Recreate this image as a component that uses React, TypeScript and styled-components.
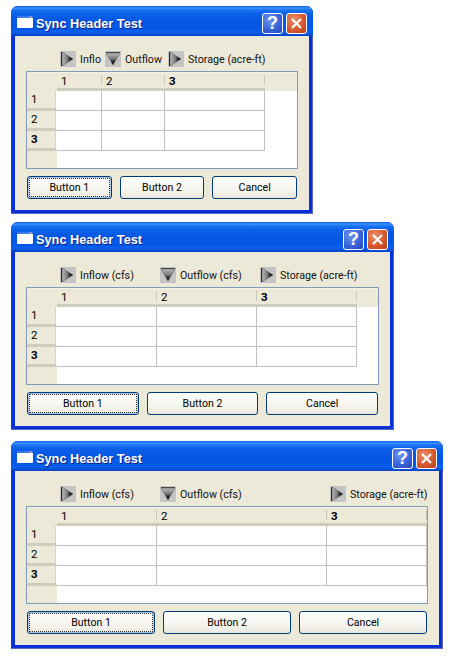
import React from "react";
import styled, { createGlobalStyle } from "styled-components";

const Global = createGlobalStyle`
  html, body { margin: 0; padding: 0; background: #fff; }
  body { font-family: Roboto, "Liberation Sans", Arial, sans-serif; font-size: 11px; color: #000; }
  #root { padding: 6px 0 0 11px; }
`;

const Window = styled.div<{ $w: number; $after: number }>`
  box-sizing: border-box;
  width: ${(p) => p.$w}px;
  height: 208px;
  margin-bottom: ${(p) => p.$after}px;
  display: flex;
  flex-direction: column;
  border-radius: 7px 7px 0 0;
  overflow: hidden;
  background: #0831d9;
  box-shadow: inset -1px -1px 0 #5b68b8, inset 1px 0 0 #0a45d8;
`;

const TitleBar = styled.div`
  flex: 0 0 30px;
  box-sizing: border-box;
  display: flex;
  align-items: flex-start;
  padding: 7px 6px 0 6px;
  background: linear-gradient(
    to bottom,
    #0a5be8 0,
    #3c93fb 2px,
    #1b72f0 4px,
    #0a5ee8 8px,
    #0557e2 16px,
    #0558e6 23px,
    #0a62ee 26px,
    #0a4fd8 28px,
    #0841c8 30px
  );
`;

const TitleGlyph = styled.svg`
  flex: none;
  margin: 3px 4px 0 0;
`;

const Title = styled.span`
  flex: 1;
  font: bold 12.75px/21px "Liberation Sans", Arial, sans-serif;
  color: #fff;
  text-shadow: 1px 1px 0 #0f1f8c;
  white-space: nowrap;
  margin-left: -1px;
`;

const CaptionGroup = styled.div`
  display: flex;
  gap: 3px;
`;

const CaptionButton = styled.div<{ $close?: boolean }>`
  box-sizing: border-box;
  width: 21px;
  height: 21px;
  border: 1px solid #fff;
  border-radius: 3px;
  display: flex;
  align-items: center;
  justify-content: center;
  color: #fff;
  background: ${(p) =>
    p.$close
      ? "radial-gradient(circle at 35% 30%, #e8906c 0, #d9592f 55%, #b93a14 100%)"
      : "radial-gradient(circle at 35% 30%, #6f95ef 0, #3b63d8 55%, #2247bd 100%)"};
`;

const HelpMark = styled.span`
  font: bold 18px "Liberation Sans", Arial, sans-serif;
  line-height: 19px;
`;

const Client = styled.div`
  flex: 1;
  margin: 0 4px 4px 4px;
  background: #ece9d8;
  padding: 15px 11px 0 11px;
  display: flex;
  flex-direction: column;
`;

const Toolbar = styled.div<{ $cols: string }>`
  display: grid;
  grid-template-columns: ${(p) => p.$cols};
  height: 16px;
  margin-bottom: 4px;
  padding-left: 1px;
`;

const ToolItem = styled.div`
  display: flex;
  align-items: center;
  gap: 4px;
  padding-left: 3px;
  white-space: nowrap;
  font-size: 10.7px;
  color: #111;
`;

const ToolSpacer = styled.div``;

const TableFrame = styled.div`
  box-sizing: border-box;
  height: 98px;
  border: 1px solid #7f9db9;
  background: #fff;
  display: flex;
  flex-direction: column;
`;

const HeaderRow = styled.div<{ $cols: string }>`
  flex: 0 0 18px;
  display: grid;
  grid-template-columns: ${(p) => p.$cols};
  background: #ece9d8;
`;

const Corner = styled.div`
  box-sizing: border-box;
  border-top: 1px solid #f4f2e8;
`;

const ColHead = styled.div<{ $bold?: boolean }>`
  box-sizing: border-box;
  padding: 2px 0 0 4px;
  font-size: 11.5px;
  font-weight: ${(p) => (p.$bold ? 700 : 400)};
  line-height: 13px;
  position: relative;
  border-bottom: 3px solid #d0ccbb;
  border-top: 1px solid #f4f2e8;
  &::after {
    content: "";
    position: absolute;
    right: 0;
    top: 2px;
    height: 10px;
    width: 1px;
    background: #cbc7b8;
  }
`;

const Tail = styled.div`
  box-sizing: border-box;
  border-top: 1px solid #f4f2e8;
`;

const Body = styled.div`
  flex: 1;
  display: flex;
  flex-direction: column;
  background: linear-gradient(to right, #ece9d8 30px, #fff 30px);
`;

const Row = styled.div<{ $cols: string }>`
  flex: 0 0 20px;
  display: grid;
  grid-template-columns: ${(p) => p.$cols};
`;

const RowHead = styled.div<{ $bold?: boolean }>`
  box-sizing: border-box;
  padding: 2px 0 0 4px;
  font-size: 11.5px;
  font-weight: ${(p) => (p.$bold ? 700 : 400)};
  line-height: 13px;
  border-bottom: 3px solid #d0ccbb;
  border-right: 1px solid #fff;
  box-shadow: inset -1px 0 0 #d8d4c4;
`;

const Cell = styled.div`
  box-sizing: border-box;
  background: #fff;
  border-right: 1px solid #c0c0c0;
  border-bottom: 1px solid #c0c0c0;
`;

const Buttons = styled.div`
  display: grid;
  grid-template-columns: repeat(3, 1fr);
  gap: 8px;
  margin: 7px 1px 0 1px;
`;

const PushButton = styled.div<{ $default?: boolean }>`
  box-sizing: border-box;
  height: 23px;
  padding-bottom: 1px;
  border: 1px solid #003c74;
  border-radius: 3px;
  background: linear-gradient(to bottom, #ffffff 0, #f5f4ee 60%, #e9e7de 100%);
  display: flex;
  align-items: center;
  justify-content: center;
  font-size: 10.6px;
  box-shadow: ${(p) => (p.$default ? "inset 0 0 0 1px #a9c4ea" : "none")};
  outline: ${(p) => (p.$default ? "1px dotted #333" : "none")};
  outline-offset: ${(p) => (p.$default ? "-3px" : "0")};
`;

function Arrow({ dir }: { dir: "right" | "down" }) {
  const id = `tri-${dir}`;
  const right = dir === "right";
  return (
    <svg width="16" height="16" viewBox="0 0 16 16" style={{ flex: "none" }}>
      <defs>
        <linearGradient id={id} x1="0" y1="0" x2={right ? "1" : "0"} y2={right ? "0" : "1"}>
          <stop offset="0" stopColor="#b8b8b8" />
          <stop offset="0.45" stopColor="#808080" />
          <stop offset="0.85" stopColor="#000" />
        </linearGradient>
      </defs>
      <rect width="16" height="16" fill="#c4c4c4" />
      {right ? (
        <>
          <path d="M2 1 L13 8 L2 15 Z" fill={`url(#${id})`} stroke="#666" strokeWidth="0.6" />
          <path d="M1.5 1 V15" stroke="#2a2a2a" />
        </>
      ) : (
        <>
          <path d="M1 2 L15 2 L8 14 Z" fill={`url(#${id})`} stroke="#666" strokeWidth="0.6" />
          <path d="M1 1.5 H15" stroke="#444" />
        </>
      )}
    </svg>
  );
}

function WindowIcon() {
  return (
    <TitleGlyph width="16" height="12" viewBox="0 0 16 12">
      <rect width="16" height="12" rx="1" fill="#fff" />
      <rect x="0" y="0" width="16" height="2" fill="#3a78e8" />
      <rect x="12" y="0.5" width="3" height="1" fill="#e8a27a" />
    </TitleGlyph>
  );
}

type Spec = {
  width: number;
  after: number;
  cols: number[];
  labels: string[];
};

const specs: Spec[] = [
  { width: 302, after: 8, cols: [45, 63, 100], labels: ["Inflo", "Outflow", "Storage (acre-ft)"] },
  { width: 383, after: 11, cols: [100, 100, 100], labels: ["Inflow (cfs)", "Outflow (cfs)", "Storage (acre-ft)"] },
  { width: 432, after: 0, cols: [100, 170, 100], labels: ["Inflow (cfs)", "Outflow (cfs)", "Storage (acre-ft)"] },
];

function TestWindow({ spec }: { spec: Spec }) {
  const template = `30px ${spec.cols.map((c) => `${c}px`).join(" ")} 1fr`;
  return (
    <Window $w={spec.width} $after={spec.after}>
      <TitleBar>
        <WindowIcon />
        <Title>Sync Header Test</Title>
        <CaptionGroup>
          <CaptionButton>
            <HelpMark>?</HelpMark>
          </CaptionButton>
          <CaptionButton $close>
            <svg width="13" height="13" viewBox="0 0 13 13">
              <path d="M2 2 L11 11 M11 2 L2 11" stroke="#fff" strokeWidth="2.2" />
            </svg>
          </CaptionButton>
        </CaptionGroup>
      </TitleBar>
      <Client>
        <Toolbar $cols={template}>
          <ToolSpacer />
          {spec.labels.map((label, i) => (
            <ToolItem key={label}>
              <Arrow dir={i === 1 ? "down" : "right"} />
              {label}
            </ToolItem>
          ))}
        </Toolbar>
        <TableFrame>
          <HeaderRow $cols={template}>
            <Corner />
            <ColHead>1</ColHead>
            <ColHead>2</ColHead>
            <ColHead $bold>3</ColHead>
            <Tail />
          </HeaderRow>
          <Body>
            {["1", "2", "3"].map((r) => (
              <Row key={r} $cols={template}>
                <RowHead $bold={r === "3"}>{r}</RowHead>
                <Cell />
                <Cell />
                <Cell />
              </Row>
            ))}
          </Body>
        </TableFrame>
        <Buttons>
          <PushButton $default>Button 1</PushButton>
          <PushButton>Button 2</PushButton>
          <PushButton>Cancel</PushButton>
        </Buttons>
      </Client>
    </Window>
  );
}

export default function App() {
  return (
    <>
      <Global />
      {specs.map((s) => (
        <TestWindow key={s.width} spec={s} />
      ))}
    </>
  );
}
